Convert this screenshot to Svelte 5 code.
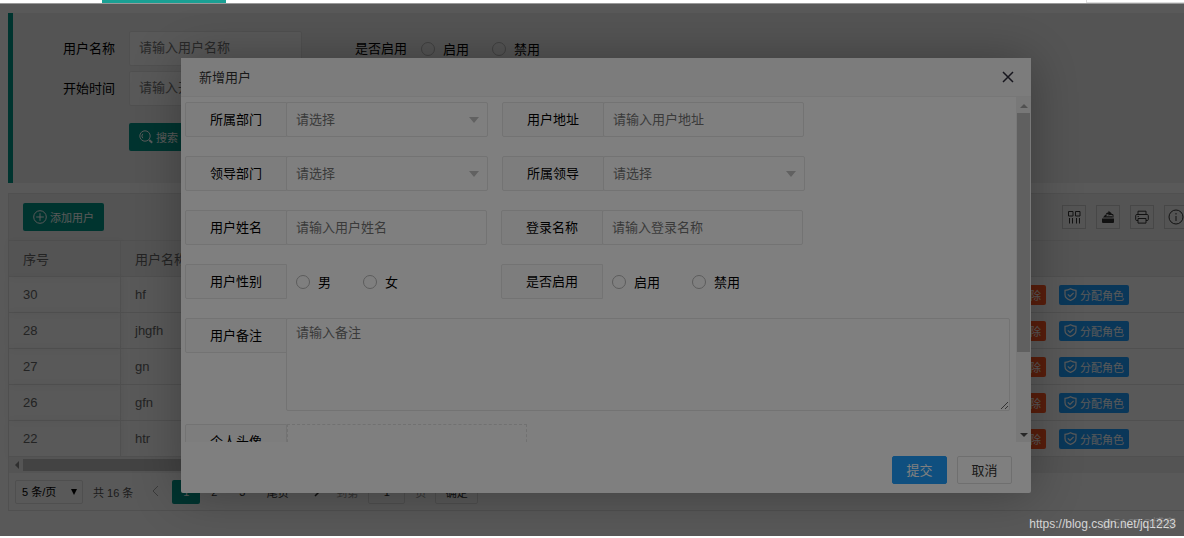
<script lang="ts">
	interface Row {
		id: number;
		name: string;
	}

	const rows: Row[] = [
		{ id: 30, name: 'hf' },
		{ id: 28, name: 'jhgfh' },
		{ id: 27, name: 'gn' },
		{ id: 26, name: 'gfn' },
		{ id: 22, name: 'htr' }
	];

	let open = $state(true);
	let current = $state(1);

	function close() {
		open = false;
	}
</script>

{#snippet picker(id: string)}
	<div class="picker">
		<select {id}>
			<option>请选择</option>
		</select>
	</div>
{/snippet}

{#snippet radios(name: string, items: string[])}
	<div class="radios">
		{#each items as item}
			<label class="radio"><input type="radio" {name} value={item} />{item}</label>
		{/each}
	</div>
{/snippet}

<div class="app">
	<div class="tabs">
		<div class="tab-active"></div>
		<div class="tab-menu"></div>
	</div>

	<div class="frame">
		<div class="canvas">
			<form class="search" onsubmit={(e) => e.preventDefault()}>
				<div class="search-row">
					<label class="search-label" for="q-name">用户名称</label>
					<input class="search-input" id="q-name" placeholder="请输入用户名称" />
					<span class="search-label second">是否启用</span>
					{@render radios('q-enabled', ['启用', '禁用'])}
				</div>
				<div class="search-row">
					<label class="search-label" for="q-start">开始时间</label>
					<input class="search-input" id="q-start" placeholder="请输入开始时间" />
				</div>
				<button class="btn btn-search" type="submit">
					<svg width="14" height="14" viewBox="0 0 14 14" fill="none" stroke="currentColor">
						<circle cx="6" cy="6" r="5.2" />
						<path d="M3.8 8.2a3.2 3.2 0 0 1 0-4.400" />
						<path d="M10.2 10l3 2.8" stroke-width="2" />
					</svg>
					搜索
				</button>
			</form>

			<section class="grid">
				<div class="toolbar">
					<button class="btn" type="button" onclick={() => (open = true)}>
						<svg width="14" height="14" viewBox="0 0 14 14" fill="none" stroke="currentColor">
							<circle cx="7" cy="7" r="6.3" />
							<path d="M7 3.2v7.6M3.2 7h7.6" />
						</svg>
						添加用户
					</button>
					<div class="tools">
						<button class="tool" type="button" aria-label="筛选列">
							<svg width="14" height="14" viewBox="0 0 14 14" fill="none" stroke="currentColor">
								<path d="M1.5 1.5h4.5v4.5H1.5zM8.5 1.5H13v4.5H8.500zM2.500 8v5.5M5.500 8v5.5M9.500 8v5.5M12.500 8v5.5" />
							</svg>
						</button>
						<button class="tool" type="button" aria-label="导出">
							<svg width="14" height="14" viewBox="0 0 14 14" fill="currentColor">
								<path d="M1 8.5h12V12q0 1-1 1H2q-1 0-1-1z" />
								<path d="M2 7.6L4 5h2l-1 1.2h6.4V7.6zM4.4 5Q5 2.3 7.5 2.3V.8l3.4 2.6-3.4 2.4V4.2Q5.6 4 4.4 5z" />
								<path d="M9 4.5h3v3" fill="none" stroke="currentColor" />
							</svg>
						</button>
						<button class="tool" type="button" aria-label="打印">
							<svg width="14" height="14" viewBox="0 0 14 14" fill="none" stroke="currentColor">
								<path d="M3 4.5V1.2h8v3.3M3 10.5H1.8q-1.1 0-1.1-1V5.6q0-1.1 1.1-1.1h10.4q1.1 0 1.1 1.1v3.9q0 1-1.1 1H11" />
								<path d="M3 8.5h8v4.6H3zM2.6 6.5h1.2" />
							</svg>
						</button>
						<button class="tool" type="button" aria-label="提示">
							<svg width="16" height="16" viewBox="0 0 16 16" fill="none" stroke="currentColor">
								<circle cx="8" cy="8" r="7" />
								<path d="M8 7v5M8 4v1.5" />
							</svg>
						</button>
					</div>
				</div>

				<table>
					<thead>
						<tr>
							<th class="col-id">序号</th>
							<th>用户名称</th>
							<th class="col-ops" aria-label="操作"></th>
						</tr>
					</thead>
					<tbody>
						{#each rows as row (row.id)}
							<tr>
								<td class="col-id">{row.id}</td>
								<td>{row.name}</td>
								<td class="col-ops">
									<div class="ops">
										<button class="op danger" type="button">删除</button>
										<button class="op info" type="button">
											<svg width="13" height="13" viewBox="0 0 13 13" fill="none" stroke="currentColor" stroke-width="1.2">
												<path d="M6.5 .8Q9 2.2 12 2.3v4.2q0 4-5.5 5.9Q1 10.5 1 6.5V2.3Q4 2.2 6.5 .8z" />
												<path d="M3.8 6.3l2.2 2.2 3.6-3.6" />
											</svg>
											分配角色
										</button>
									</div>
								</td>
							</tr>
						{/each}
					</tbody>
				</table>

				<div class="hscroll">
					<span class="arrow left"></span>
					<span class="hthumb"></span>
				</div>

				<div class="pager">
					<div class="page-size">
						<select aria-label="每页条数">
							<option>5 条/页</option>
						</select>
					</div>
					<span class="total">共 16 条</span>
					<button class="page prev" type="button" aria-label="上一页">
						<svg width="8" height="12" viewBox="0 0 8 12" fill="none" stroke="currentColor">
							<path d="M7 1L2 6l5 5" />
						</svg>
					</button>
					{#each [1, 2, 3] as n}
						<button class="page" class:active={n === current} type="button" onclick={() => (current = n)}>{n}</button>
					{/each}
					<button class="page last" type="button">尾页</button>
					<button class="page next" type="button" aria-label="下一页">
						<svg width="8" height="12" viewBox="0 0 8 12" fill="none" stroke="currentColor" stroke-width="1.5">
							<path d="M1 1l5 5-5 5" />
						</svg>
					</button>
					<label class="jump">到第 <input value="1" /> 页</label>
					<button class="confirm" type="button">确定</button>
				</div>
			</section>

			{#if open}
				<div class="backdrop">
					<div class="modal" role="dialog" aria-modal="true" aria-labelledby="modal-title">
						<header class="modal-head">
							<h2 id="modal-title">新增用户</h2>
							<button class="close" type="button" aria-label="关闭" onclick={close}>
								<svg width="12" height="12" viewBox="0 0 12 12" fill="none" stroke="currentColor" stroke-width="1.5">
									<path d="M1 1l10 10M11 1L1 11" />
								</svg>
							</button>
						</header>

						<div class="modal-body">
							<form class="fields" id="user-form" onsubmit={(e) => e.preventDefault()}>
								<div class="row">
									<div class="item">
										<label for="dept">所属部门</label>
										{@render picker('dept')}
									</div>
									<div class="item">
										<label for="address">用户地址</label>
										<input class="text" id="address" placeholder="请输入用户地址" />
									</div>
								</div>
								<div class="row">
									<div class="item">
										<label for="lead-dept">领导部门</label>
										{@render picker('lead-dept')}
									</div>
									<div class="item">
										<label for="leader">所属领导</label>
										{@render picker('leader')}
									</div>
								</div>
								<div class="row">
									<div class="item">
										<label for="name">用户姓名</label>
										<input class="text" id="name" placeholder="请输入用户姓名" />
									</div>
									<div class="item">
										<label for="login">登录名称</label>
										<input class="text" id="login" placeholder="请输入登录名称" />
									</div>
								</div>
								<div class="row">
									<div class="item">
										<span class="caption">用户性别</span>
										{@render radios('gender', ['男', '女'])}
									</div>
									<div class="item">
										<span class="caption">是否启用</span>
										{@render radios('enabled', ['启用', '禁用'])}
									</div>
								</div>
								<div class="row">
									<div class="item wide">
										<label for="remark">用户备注</label>
										<textarea id="remark" placeholder="请输入备注"></textarea>
									</div>
								</div>
								<div class="row">
									<div class="item">
										<span class="caption">个人头像</span>
										<div class="upload"></div>
									</div>
								</div>
							</form>
							<div class="vscroll">
								<span class="arrow up"></span>
								<span class="vthumb"></span>
								<span class="arrow down"></span>
							</div>
						</div>

						<footer class="modal-foot">
							<button class="primary" type="submit" form="user-form">提交</button>
							<button class="plain" type="button" onclick={close}>取消</button>
						</footer>
					</div>
				</div>
			{/if}
		</div>
		<div class="shade"></div>
		<div class="mark faint">@51CTO博客</div>
		<div class="mark">https://blog.csdn.net/jq1223</div>
	</div>
</div>

<style>
	:global(body) {
		margin: 0;
		background: #fff;
	}
	.app {
		height: 100vh;
		box-sizing: border-box;
		padding-bottom: 2px;
		display: flex;
		flex-direction: column;
		overflow: hidden;
		font-family: 'Liberation Sans', 'Noto Sans CJK SC', sans-serif;
		font-size: 13px;
		color: #000;
	}
	.app :global(*) {
		box-sizing: border-box;
	}
	button,
	input,
	select,
	textarea {
		font: inherit;
		color: inherit;
		margin: 0;
		border-radius: 2px;
	}
	button {
		padding: 0;
		cursor: pointer;
	}
	svg {
		flex: none;
	}
	::placeholder {
		color: #757575;
		opacity: 1;
	}

	.tabs {
		flex: none;
		display: flex;
		justify-content: space-between;
		height: 4px;
		padding-left: 102px;
		border-bottom: 1px solid #999;
	}
	.tab-active {
		width: 124px;
		background: #1aa094;
	}
	.tab-menu {
		width: 98px;
		border-left: 1px solid #ddd;
		border-bottom: 1px solid #ddd;
	}

	.frame {
		position: relative;
		flex: 1;
		min-height: 0;
		overflow: hidden;
	}
	/* content is a little wider than the window and gets cut on the right */
	.canvas {
		position: relative;
		height: 100%;
		margin-right: -28px;
		padding: 9px 10px 0 8px;
	}
	.shade {
		position: absolute;
		inset: 0;
		background: rgba(0, 0, 0, 0.5);
		pointer-events: none;
	}

	.search {
		display: flex;
		flex-direction: column;
		gap: 5px;
		padding: 18px 0 32px;
		border-left: 5px solid #009688;
		background: #f2f2f2;
	}
	.search-row {
		display: flex;
		align-items: center;
		height: 35px;
	}
	.search-label {
		width: 116px;
		padding: 0 14px 2px 0;
		text-align: right;
	}
	.search-label.second {
		margin-left: 3px;
	}
	.search-input {
		width: 173px;
		height: 35px;
		padding: 0 9px 2px;
		border: 1px solid #e6e6e6;
		background: #fff;
	}
	.radios {
		display: flex;
		align-items: center;
		gap: 23px;
	}
	.radio {
		display: flex;
		align-items: center;
		gap: 8px;
	}
	.radio input {
		appearance: none;
		width: 14px;
		height: 14px;
		border: 1px solid #b8b8b8;
		border-radius: 50%;
	}
	.btn {
		display: flex;
		align-items: center;
		gap: 3px;
		height: 28px;
		padding: 0 10px;
		border: none;
		background: #009688;
		color: #fff;
		font-size: 11px;
	}
	.btn-search {
		align-self: flex-start;
		margin: 12px 0 0 116px;
	}

	.grid {
		margin-top: 10px;
		border: 1px solid #e6e6e6;
	}
	.toolbar {
		display: flex;
		align-items: center;
		justify-content: space-between;
		height: 47px;
		padding: 0 13px 0 14px;
		border-bottom: 1px solid #e6e6e6;
		background: #f2f2f2;
	}
	.tools {
		display: flex;
		gap: 10px;
	}
	.tool {
		display: flex;
		align-items: center;
		justify-content: center;
		width: 24px;
		height: 24px;
		border: 1px solid #ccc;
		border-radius: 0;
		background: none;
		color: #333;
	}

	table {
		width: 100%;
		border-collapse: separate;
		border-spacing: 0;
		table-layout: fixed;
		color: #666;
	}
	th,
	td {
		height: 36px;
		padding: 0 14px;
		border-bottom: 1px solid #e6e6e6;
		text-align: left;
		font-weight: 400;
	}
	th {
		background: #f2f2f2;
	}
	.col-id {
		width: 112px;
		border-right: 1px solid #e6e6e6;
		box-shadow: 1px 0 8px rgba(0, 0, 0, 0.05);
	}
	.col-ops {
		padding-right: 72px;
	}
	.ops {
		display: flex;
		justify-content: flex-end;
		gap: 13px;
	}
	.op {
		display: flex;
		align-items: center;
		gap: 3px;
		height: 20px;
		padding: 0 5px;
		border: none;
		color: #fff;
		font-size: 11px;
	}
	.danger {
		background: #ff5722;
	}
	.info {
		background: #1e9fff;
	}

	.hscroll {
		display: flex;
		align-items: center;
		gap: 4px;
		height: 16px;
		padding-left: 2px;
		background: #f1f1f1;
	}
	.hthumb {
		width: 900px;
		height: 12px;
		background: #c1c1c1;
	}
	.arrow {
		flex: none;
		border: 4px solid transparent;
	}
	.arrow.left {
		border-right-color: #888;
	}
	.pager {
		display: flex;
		align-items: center;
		height: 37px;
		padding-left: 6px;
		font-size: 11px;
		color: #333;
	}
	.page-size {
		position: relative;
		width: 68px;
		color: #000;
	}
	.page-size select {
		appearance: none;
		width: 100%;
		height: 24px;
		padding: 0 6px;
		border: 1px solid #e2e2e2;
		background: #fff;
	}
	.page-size::after {
		content: '';
		position: absolute;
		right: 6px;
		top: 9px;
		border: 3px solid transparent;
		border-top: 6px solid #000;
		border-bottom: 0;
		pointer-events: none;
	}
	.total {
		margin-left: 10px;
		color: #555;
	}
	.page {
		width: 28px;
		height: 24px;
		border: none;
		background: none;
	}
	.page.prev {
		width: 39px;
		padding-left: 4px;
		color: #aaa;
	}
	.page.active {
		background: #009688;
		color: #fff;
	}
	.page.last {
		width: 43px;
	}
	.page.next {
		width: 37px;
	}
	.jump {
		display: flex;
		align-items: center;
		gap: 10px;
		color: #999;
	}
	.jump input {
		width: 37px;
		height: 24px;
		border: 1px solid #e2e2e2;
		text-align: center;
		color: #333;
	}
	.confirm {
		width: 43px;
		height: 24px;
		margin-left: 9px;
		border: 1px solid #e2e2e2;
		background: #fff;
	}

	.backdrop {
		position: absolute;
		inset: 0;
		display: flex;
		justify-content: center;
		align-items: flex-start;
		padding-top: 54px;
		background: rgba(0, 0, 0, 0.3);
	}
	.modal {
		width: 850px;
		border-radius: 2px;
		background: #fff;
		box-shadow: 1px 1px 50px rgba(0, 0, 0, 0.3);
	}
	.modal-head {
		display: flex;
		align-items: center;
		justify-content: space-between;
		height: 39px;
		padding: 0 17px 0 18px;
		border-bottom: 1px solid #eee;
		background: #f8f8f8;
	}
	h2 {
		margin: 0;
		padding-bottom: 2px;
		font-size: 13px;
		font-weight: 400;
		color: #333;
	}
	.close {
		display: flex;
		border: none;
		background: none;
		color: #2e2d3c;
	}
	.modal-body {
		display: flex;
		height: 345px;
		overflow: hidden;
	}
	.fields {
		flex: 1;
		display: flex;
		flex-direction: column;
		padding: 5px 6px 0 4px;
	}
	.row {
		display: flex;
		gap: 14px;
		margin-bottom: 19px;
	}
	.item {
		display: flex;
	}
	.item.wide {
		flex: 1;
		margin-bottom: -6px;
	}
	.item > label,
	.caption {
		flex: none;
		width: 102px;
		height: 35px;
		border: 1px solid #e6e6e6;
		border-radius: 2px 0 0 2px;
		background: #fbfbfb;
		line-height: 33px;
		text-align: center;
	}
	.text,
	.picker,
	.item textarea {
		margin-left: -1px;
	}
	.text,
	.picker select,
	.item textarea {
		height: 35px;
		padding: 0 9px;
		border: 1px solid #e6e6e6;
		background: #fff;
	}
	.text {
		width: 201px;
	}
	.picker {
		position: relative;
		width: 202px;
	}
	.picker select {
		appearance: none;
		width: 100%;
		color: #757575;
	}
	.picker::after {
		content: '';
		position: absolute;
		right: 9px;
		top: 15px;
		border: 5px solid transparent;
		border-top: 6px solid #c2c2c2;
		border-bottom: 0;
		pointer-events: none;
	}
	.item .radios {
		width: 200px;
		gap: 32px;
		padding-left: 9px;
	}
	.item textarea {
		flex: 1;
		height: 93px;
		padding: 4px 9px;
		line-height: 19px;
		resize: vertical;
	}
	.upload {
		width: 240px;
		height: 120px;
		border: 1px dashed #e2e2e2;
	}

	.vscroll {
		flex: none;
		display: flex;
		flex-direction: column;
		align-items: center;
		width: 15px;
		padding: 3px 0 1px;
		background: #f1f1f1;
	}
	.arrow.up {
		border-bottom-color: #a3a3a3;
	}
	.vthumb {
		width: 13px;
		height: 239px;
		margin-top: 5px;
		background: #c1c1c1;
	}
	.arrow.down {
		margin-top: auto;
		border-top-color: #505050;
	}
	.modal-foot {
		display: flex;
		justify-content: flex-end;
		gap: 10px;
		padding: 14px 19px 9px;
	}
	.modal-foot button {
		width: 55px;
		height: 28px;
		padding-bottom: 2px;
		border: 1px solid #dedede;
		background: #fff;
		color: #333;
	}
	.modal-foot .primary {
		border-color: #1e9fff;
		background: #1e9fff;
		color: #fff;
	}

	.mark {
		position: absolute;
		right: 8px;
		bottom: 5px;
		font-size: 12px;
		color: rgba(255, 255, 255, 0.75);
		pointer-events: none;
	}
	.mark.faint {
		color: rgba(255, 255, 255, 0.2);
	}
</style>
